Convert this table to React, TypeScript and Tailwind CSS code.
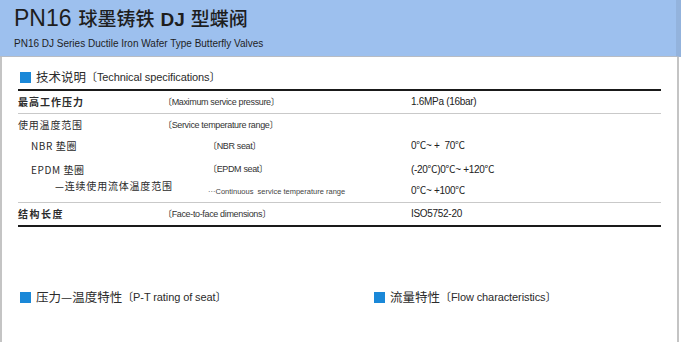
import React from 'react';

const cjk = "font-['Noto_Sans_CJK_SC',sans-serif]";
const latin = "font-['Liberation_Sans','Noto_Sans_CJK_SC',sans-serif]";

const SectionTitle: React.FC<{ zh: string; en: string }> = ({ zh, en }) => (
  <div className="flex items-center leading-[16px] text-[#2b2b2b]">
    <span className="w-[11px] h-[11px] bg-[#1a88d8] mr-[5px]" />
    <span className={`${cjk} text-[12.5px]`}>{zh}</span>
    <span className={`${latin} text-[11px] tracking-[-0.1px]`}>〔{en}〕</span>
  </div>
);

const labelCls = `${cjk} text-[10px] leading-[12px] text-[#2b2b2b]`;
const enCls = `${latin} text-[9px] leading-[12px] tracking-[-0.35px] text-[#333]`;
const valCls = `${latin} text-[10px] leading-[12px] tracking-[-0.3px] text-[#222]`;

export default function App() {
  return (
    <div className="w-[681px] h-[342px] bg-white overflow-hidden">
      {/* header band */}
      <div className="h-[57px] bg-[#9dc0ee] border-b border-[#b7bcc4] border-r-[5px] border-r-[#93b3dd] pl-[14px] pt-[5px]">
        <div className="flex items-baseline leading-[26px] text-[#1e1e1e]">
          <span className={`${latin} text-[23px]`}>PN16</span>
          <span className={`${cjk} text-[19px] font-medium ml-[7px]`}>球墨铸铁</span>
          <span className={`${latin} text-[19px] font-bold ml-[6px]`}>DJ</span>
          <span className={`${cjk} text-[19px] font-medium ml-[6px]`}>型蝶阀</span>
        </div>
        <div className={`${latin} text-[10px] leading-[12px] text-[#1e1e1e] mt-[5px]`}>
          PN16 DJ Series Ductile Iron Wafer Type Butterfly Valves
        </div>
      </div>

      <div className="w-[679px] h-[285px] border-l-2 border-r-2 border-[#c4c4c4]">
        {/* technical specifications */}
        <div className="h-[32px] pt-[12px] pl-[18px]">
          <SectionTitle zh="技术说明" en="Technical specifications" />
        </div>

        <div className="ml-[16px] w-[643px]">
          <div className="h-[2px] bg-[#1a1a1a]" />

          <div className="h-[23px] flex items-center border-b border-[#c9c9c9]">
            <span className={`${labelCls} font-bold tracking-[1px] w-[145px]`}>最高工作压力</span>
            <span className={`${enCls} w-[248px]`}>〔Maximum service pressure〕</span>
            <span className={valCls}>1.6MPa (16bar)</span>
          </div>

          <div className="h-[22px] flex items-center">
            <span className={`${labelCls} tracking-[0.8px] w-[145px]`}>使用温度范围</span>
            <span className={enCls}>〔Service temperature range〕</span>
          </div>

          <div className="h-[20px] flex items-center">
            <span className={`${labelCls} tracking-[0.6px] w-[190px] pl-[13px]`}>NBR 垫圈</span>
            <span className={`${enCls} w-[203px]`}>〔NBR seat〕</span>
            <span className={valCls}>0℃~ +&nbsp; 70℃</span>
          </div>

          <div className="h-[22px] flex items-start pt-[8px]">
            <span className={`${labelCls} tracking-[0.6px] w-[190px] pl-[13px]`}>EPDM 垫圈</span>
            <span className={`${enCls} w-[203px] -mt-[1px]`}>〔EPDM seat〕</span>
            <span className={valCls}>(-20℃)0℃~ +120℃</span>
          </div>

          <div className="h-[25px] flex items-start border-b border-[#c9c9c9]">
            <span className={`${labelCls} tracking-[0.8px] w-[190px] pl-[37px] pt-[2px]`}>—连续使用流体温度范围</span>
            <span className={`${latin} text-[7.5px] leading-[10px] text-[#444] w-[203px] pt-[9px]`}>
              ···Continuous&nbsp; service temperature range
            </span>
            <span className={`${valCls} pt-[7px]`}>0℃~ +100℃</span>
          </div>

          <div className="h-[22px] flex items-center">
            <span className={`${labelCls} font-bold tracking-[1.5px] w-[145px]`}>结构长度</span>
            <span className={`${enCls} w-[248px]`}>〔Face-to-face dimensions〕</span>
            <span className={valCls}>ISO5752-20</span>
          </div>

          <div className="h-[2px] bg-[#1a1a1a]" />
        </div>

        {/* bottom section titles */}
        <div className="flex mt-[62px]">
          <div className="w-[372px] pl-[18px]">
            <SectionTitle zh="压力—温度特性" en="P-T rating of seat" />
          </div>
          <div>
            <SectionTitle zh="流量特性" en="Flow characteristics" />
          </div>
        </div>
      </div>
    </div>
  );
}
